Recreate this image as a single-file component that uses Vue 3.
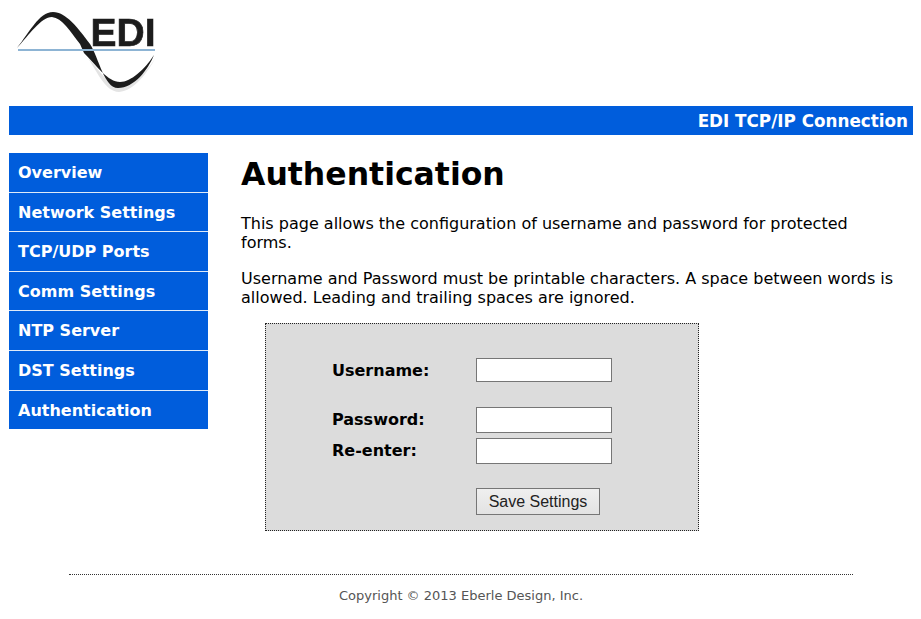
<template>
  <div class="page">
    <header class="logo-row">
      <svg class="logo" width="170" height="106" viewBox="9 0 170 106">
        <defs>
          <filter id="soft" x="-5%" y="-5%" width="110%" height="110%"><feGaussianBlur stdDeviation="0.55" /></filter>
        </defs>
        <g filter="url(#soft)">
          <path class="wave-shadow" d="M88 58 C97 72 106 92 119 92 C134 91 148 72 156 57 C147 72 132 86 120 86 C108 86 98 68 88 58 Z" />
          <path class="wave" d="M17 48 C29 33 39 12 53 12 C66 12 78 28 90 44 C99 58 104 88 118 88 C134 88 148 70 154 55 C145 69 131 82 120 82 C108 82 97 66 84 53 L80 44 C70 31 62 18 52 17 C41 17 29 35 17 48 Z" />
          <text class="logo-text" x="90.5" y="46">EDI</text>
          <rect x="18" y="49" width="137" height="2" fill="#8db4d4" />
        </g>
      </svg>
    </header>

    <div class="title-bar">EDI TCP/IP Connection</div>

    <div class="columns">
      <nav class="side-nav">
        <a v-for="item in navItems" :key="item" class="nav-link" href="#">{{ item }}</a>
      </nav>

      <main class="content">
        <h1>Authentication</h1>
        <p class="intro">This page allows the configuration of username and password for protected forms.</p>
        <p class="rules">Username and Password must be printable characters. A space between words is allowed. Leading and trailing spaces are ignored.</p>

        <form class="auth-box" @submit.prevent>
          <label class="field first">
            <span>Username:</span>
            <input type="text" class="short" />
          </label>
          <label class="field second">
            <span>Password:</span>
            <input type="password" />
          </label>
          <label class="field third">
            <span>Re-enter:</span>
            <input type="password" />
          </label>
          <button class="save" type="submit">Save Settings</button>
        </form>
      </main>
    </div>

    <footer class="footer">Copyright © 2013 Eberle Design, Inc.</footer>
  </div>
</template>

<script setup>
const navItems = [
  'Overview',
  'Network Settings',
  'TCP/UDP Ports',
  'Comm Settings',
  'NTP Server',
  'DST Settings',
  'Authentication'
];
</script>

<style>
body {
  background: #fff;
}
</style>

<style scoped>
.page {
  width: 921px;
  height: 619px;
  overflow: hidden;
  box-sizing: border-box;
  padding: 0 8px 0 9px;
  font-family: 'DejaVu Sans', Verdana, sans-serif;
  color: #000;
}

.logo-row {
  height: 106px;
}

.logo {
  display: block;
}

.wave {
  fill: #1c1c1c;
}

.wave-shadow {
  fill: #e4e4e4;
}

.logo-text {
  font-family: 'Liberation Sans', Arial, sans-serif;
  font-weight: 700;
  font-size: 39px;
  fill: #1c1c1c;
  stroke: #1c1c1c;
  stroke-width: 0.6px;
}

.title-bar {
  height: 29px;
  line-height: 31px;
  background: #005ddc;
  color: #fff;
  font-weight: 700;
  font-size: 16.8px;
  text-align: right;
  padding-right: 5px;
}

.columns {
  display: flex;
  margin-top: 18px;
}

.side-nav {
  width: 199px;
  flex: none;
  display: flex;
  flex-direction: column;
}

.nav-link {
  height: 38.6px;
  line-height: 40px;
  background: #005ddc;
  color: #fff;
  font-weight: 700;
  font-size: 16px;
  text-decoration: none;
  padding-left: 9px;
  border-bottom: 1px solid #dfeaf8;
}

.nav-link:last-child {
  border-bottom: none;
}

.content {
  margin-left: 33px;
  width: 657px;
  flex: none;
}

h1 {
  font-size: 31.5px;
  line-height: 40px;
  margin: 1px 0 20px;
  font-weight: 700;
}

p {
  margin: 0;
  font-size: 16px;
  line-height: 19px;
}

.intro {
  margin-bottom: 17px;
}

.auth-box {
  width: 434px;
  height: 208px;
  box-sizing: border-box;
  margin: 16px 0 0 24px;
  border: 1px dotted #222;
  background: #dcdcdc;
  padding: 34px 0 0 66px;
  display: flex;
  flex-direction: column;
  align-items: flex-start;
}

.field {
  display: flex;
  align-items: center;
  font-weight: 700;
  font-size: 16px;
}

.field span {
  width: 144px;
  margin-top: -2px;
}

.field.first span {
  margin-top: 0;
}

.second {
  margin-top: 25px;
}

.third {
  margin-top: 5px;
}

input {
  width: 136px;
  height: 26px;
  box-sizing: border-box;
  border: 1px solid #767676;
  background: #fff;
  padding: 0;
  margin: 0;
}

input.short {
  height: 24px;
}

.save {
  margin: 24px 0 0 144px;
  width: 124px;
  height: 27px;
  box-sizing: border-box;
  border: 1px solid #767676;
  background: linear-gradient(#efefef, #e3e3e3);
  color: #222;
  font-family: 'Liberation Sans', Arial, sans-serif;
  font-size: 16px;
  padding: 0;
}

.footer {
  margin: 43px 60px 0;
  border-top: 1px dotted #333;
  padding-top: 13px;
  text-align: center;
  font-size: 13px;
  line-height: 16px;
  color: #555;
}
</style>
